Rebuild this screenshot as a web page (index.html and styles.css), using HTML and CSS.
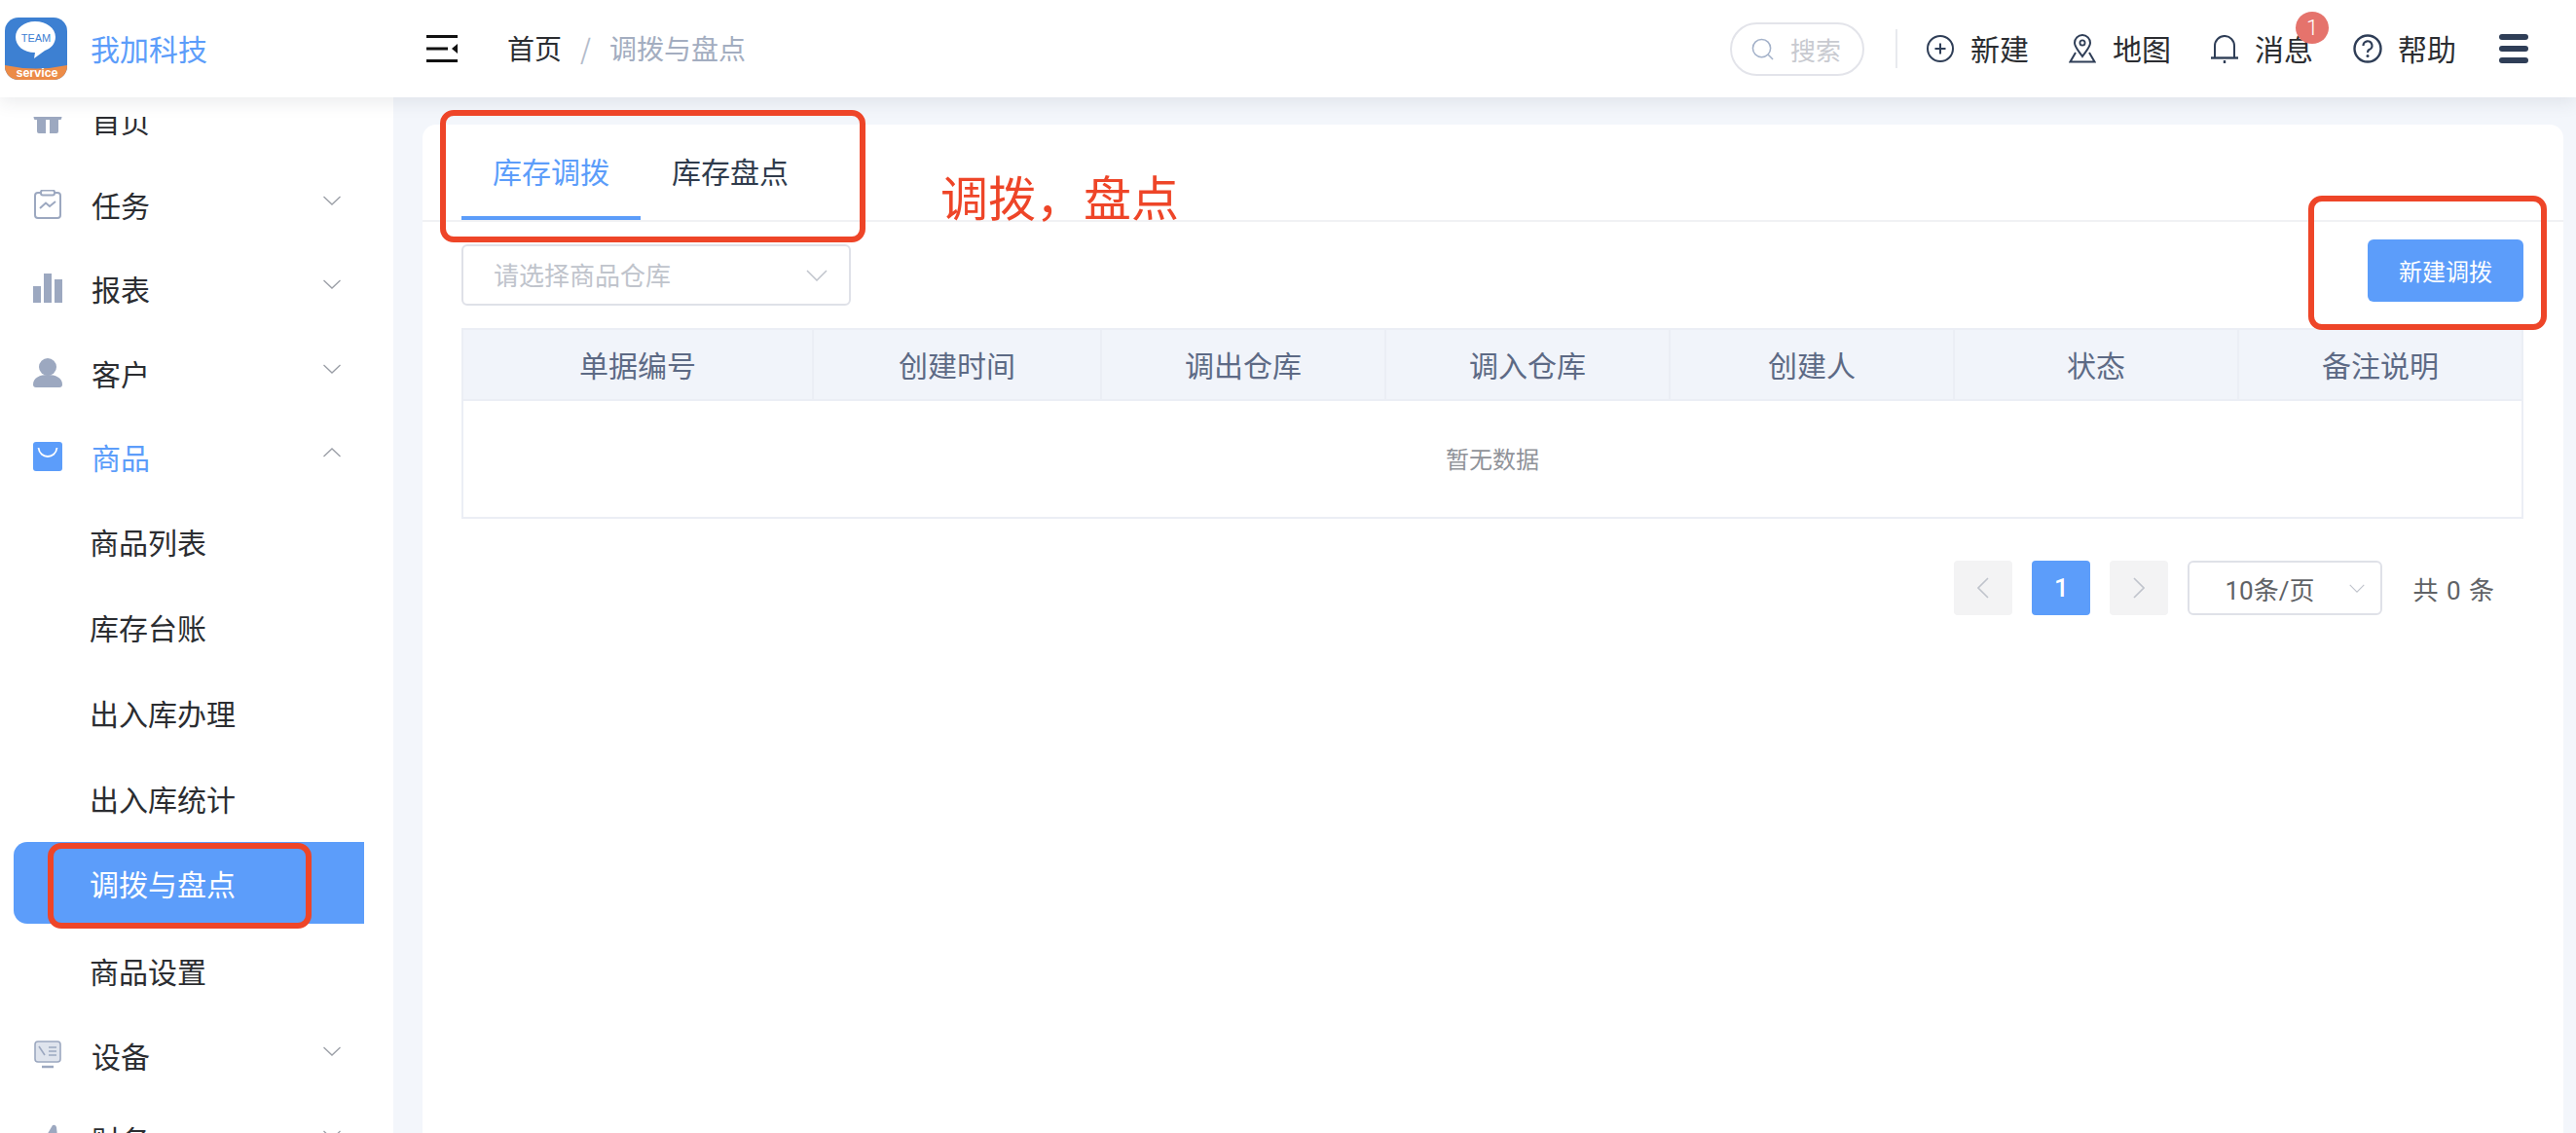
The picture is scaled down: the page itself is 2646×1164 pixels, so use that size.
FILE: index.html
```html
<!DOCTYPE html>
<html lang="zh-CN">
<head>
    <meta charset="UTF-8">
    <title>调拨与盘点</title>
    <link rel="stylesheet" href="styles.css">
</head>
<body>
    <!-- Top bar -->
    <header class="topbar">
        <div class="brand">
            <svg class="logo" viewBox="0 0 64 64">
                <defs><clipPath id="logoClip"><rect width="64" height="64" rx="14"/></clipPath></defs>
                <g clip-path="url(#logoClip)">
                    <rect width="64" height="64" fill="#3d80d2"/>
                    <path d="M0 49 Q32 56 64 49 V64 H0 Z" fill="#ec8b47"/>
                    <path d="M31 4 C43 4 52 11 52 20 C52 27 47 32 41 34 L30 42 L31 36 C19 36 11 29 11 20 C11 11 20 4 31 4 Z" fill="#fff"/>
                    <text x="32" y="25" class="logo-team">TEAM</text>
                    <text x="33" y="61" class="logo-service">service</text>
                </g>
            </svg>
            <span class="brand-name">我加科技</span>
        </div>
        <div class="topbar-main">
            <svg class="toggle" viewBox="0 0 32 28">
                <path d="M0 1.5H32M0 14H22M0 26.5H32" stroke="#111" stroke-width="3" fill="none"/>
                <path d="M32 9V19L26 14Z" fill="#111"/>
            </svg>
            <nav class="breadcrumb">
                <span>首页</span>
                <span class="sep">/</span>
                <span class="current">调拨与盘点</span>
            </nav>
            <div class="top-actions">
                <div class="search">
                    <svg class="search-icon" viewBox="0 0 24 24">
                        <circle cx="11" cy="11" r="9.5" fill="none" stroke="#a3b1c9" stroke-width="1.6"/>
                        <path d="M18 18L23 23" stroke="#a3b1c9" stroke-width="1.6"/>
                    </svg>
                    <span>搜索</span>
                </div>
                <div class="top-divider"></div>
                <div class="top-link">
                    <svg class="top-icon" viewBox="0 0 28 28">
                        <circle cx="14" cy="14" r="13" fill="none" stroke="#2f3e57" stroke-width="2"/>
                        <path d="M14 8.5V19.5M8.500 14H19.500" stroke="#2f3e57" stroke-width="2"/>
                    </svg>
                    <span>新建</span>
                </div>
                <div class="top-link">
                    <svg class="top-icon" viewBox="0 0 28 30">
                        <path d="M14 23 C9 16 6 13 6 9 A8 8 0 0 1 22 9 C22 13 19 16 14 23 Z" fill="none" stroke="#2f3e57" stroke-width="2"/>
                        <circle cx="14" cy="9" r="2.600" fill="none" stroke="#2f3e57" stroke-width="1.800"/>
                        <path d="M7 19L1.500 28.500H26.500L21 19" fill="none" stroke="#2f3e57" stroke-width="2"/>
                    </svg>
                    <span>地图</span>
                </div>
                <div class="top-link has-badge">
                    <svg class="top-icon" viewBox="0 0 28 30">
                        <path d="M4 24 V12 A10 10 0 0 1 24 12 V24" fill="none" stroke="#2f3e57" stroke-width="2"/>
                        <path d="M0 24.500H28" stroke="#2f3e57" stroke-width="2.400"/>
                        <path d="M14 1V3M14 27V30" stroke="#2f3e57" stroke-width="2.400"/>
                    </svg>
                    <span>消息</span>
                    <span class="badge">1</span>
                </div>
                <div class="top-link">
                    <svg class="top-icon help-icon" viewBox="0 0 30 30">
                        <circle cx="15" cy="15" r="13.500" fill="none" stroke="#2f3e57" stroke-width="2.400"/>
                        <path d="M10.500 12 A4.500 4.500 0 1 1 16.500 16 C15.200 16.700 15 17.500 15 19" fill="none" stroke="#2f3e57" stroke-width="2.200"/>
                        <circle cx="15" cy="22.500" r="1.500" fill="#2f3e57"/>
                    </svg>
                    <span>帮助</span>
                </div>
                <div class="hamburger"><i></i><i></i><i></i></div>
            </div>
        </div>
    </header>

    <div class="layout">
        <!-- Sidebar, scrolled a little so the first row sits under the top bar -->
        <aside class="sidebar">
            <ul class="menu">
                <li class="menu-item">
                    <svg class="menu-icon" viewBox="0 0 30 30">
                        <path d="M1.500 10 H28.500 Q30.500 12 28.500 15 H26 V27 Q26 29 24 29 H17 V15 H13 V29 H6 Q4 29 4 27 V15 H1.500 Q-0.500 12 1.500 10 Z" fill="#9ca8c0"/>
                    </svg>
                    <span>首页</span>
                </li>
                <li class="menu-item">
                    <svg class="menu-icon" viewBox="0 0 30 30">
                        <rect x="2" y="3" width="26" height="26" rx="3" fill="none" stroke="#9ca8c0" stroke-width="2"/>
                        <rect x="8" y="0.500" width="14" height="5" rx="2" fill="#fff" stroke="#9ca8c0" stroke-width="2"/>
                        <path d="M7 19L13 13.500L17 17L23 12" fill="none" stroke="#9ca8c0" stroke-width="2"/>
                    </svg>
                    <span>任务</span>
                    <svg class="chevron" viewBox="0 0 18 10"><path d="M0.500 1L9 9L17.500 1" fill="none" stroke="#9a9ea6" stroke-width="1.300"/></svg>
                </li>
                <li class="menu-item">
                    <svg class="menu-icon" viewBox="0 0 30 30">
                        <path d="M0 13H8V30H0ZM11 0H19V30H11ZM22 6H30V30H22Z" fill="#9ca8c0"/>
                    </svg>
                    <span>报表</span>
                    <svg class="chevron" viewBox="0 0 18 10"><path d="M0.500 1L9 9L17.500 1" fill="none" stroke="#9a9ea6" stroke-width="1.300"/></svg>
                </li>
                <li class="menu-item">
                    <svg class="menu-icon" viewBox="0 0 30 30">
                        <circle cx="15" cy="9" r="9" fill="#9ca8c0"/>
                        <path d="M0 27 C0 20 7 17 15 17 C23 17 30 20 30 27 Q30 30 27 30 H3 Q0 30 0 27 Z" fill="#9ca8c0"/>
                    </svg>
                    <span>客户</span>
                    <svg class="chevron" viewBox="0 0 18 10"><path d="M0.500 1L9 9L17.500 1" fill="none" stroke="#9a9ea6" stroke-width="1.300"/></svg>
                </li>
                <li class="menu-item open">
                    <svg class="menu-icon" viewBox="0 0 30 30">
                        <rect width="30" height="30" rx="3" fill="#5c9dfa"/>
                        <path d="M5.500 6 C7 18 23 18 24.500 6" fill="none" stroke="#fff" stroke-width="1.800"/>
                    </svg>
                    <span>商品</span>
                    <svg class="chevron" viewBox="0 0 18 10"><path d="M0.500 9L9 1L17.500 9" fill="none" stroke="#9a9ea6" stroke-width="1.300"/></svg>
                </li>
                <li class="submenu-item">商品列表</li>
                <li class="submenu-item">库存台账</li>
                <li class="submenu-item">出入库办理</li>
                <li class="submenu-item">出入库统计</li>
                <li class="submenu-item active"><span class="active-pill">调拨与盘点</span></li>
                <li class="submenu-item">商品设置</li>
                <li class="menu-item">
                    <svg class="menu-icon" viewBox="0 0 30 30">
                        <rect x="2" y="1" width="26" height="21" rx="3" fill="#dfe4ed" stroke="#9ca8c0" stroke-width="1.600"/>
                        <path d="M6 6L12 15M16 7H24M16 11H24M16 15H24" stroke="#9ca8c0" stroke-width="1.600" fill="none"/>
                        <path d="M9 27H21" stroke="#9ca8c0" stroke-width="2.500"/>
                    </svg>
                    <span>设备</span>
                    <svg class="chevron" viewBox="0 0 18 10"><path d="M0.500 1L9 9L17.500 1" fill="none" stroke="#9a9ea6" stroke-width="1.300"/></svg>
                </li>
                <li class="menu-item">
                    <svg class="menu-icon" viewBox="0 0 30 30">
                        <path d="M3 30 L20 1 Q23 0 24 3 L27 30 Z" fill="#9ca8c0"/>
                    </svg>
                    <span>财务</span>
                    <svg class="chevron" viewBox="0 0 18 10"><path d="M0.500 1L9 9L17.500 1" fill="none" stroke="#9a9ea6" stroke-width="1.300"/></svg>
                </li>
            </ul>
        </aside>

        <main class="content">
            <section class="card">
                <div class="tabs">
                    <div class="tab active">库存调拨</div>
                    <div class="tab">库存盘点</div>
                </div>

                <div class="toolbar">
                    <div class="select store-select">
                        <span>请选择商品仓库</span>
                        <svg class="select-arrow" viewBox="0 0 22 12"><path d="M1 1L11 11L21 1" fill="none" stroke="#c0c4cc" stroke-width="1.500"/></svg>
                    </div>
                    <button class="btn-primary">新建调拨</button>
                </div>

                <table class="data-table">
                    <thead>
                        <tr>
                            <th class="col-first">单据编号</th>
                            <th class="col-second">创建时间</th>
                            <th>调出仓库</th>
                            <th>调入仓库</th>
                            <th>创建人</th>
                            <th>状态</th>
                            <th>备注说明</th>
                        </tr>
                    </thead>
                    <tbody>
                        <tr><td colspan="7" class="empty">暂无数据</td></tr>
                    </tbody>
                </table>

                <div class="pagination">
                    <div class="page-btn">
                        <svg class="page-arrow" viewBox="0 0 12 22"><path d="M11 1L1 11L11 21" fill="none" stroke="#c0c4cc" stroke-width="1.600"/></svg>
                    </div>
                    <div class="page-btn current">1</div>
                    <div class="page-btn">
                        <svg class="page-arrow" viewBox="0 0 12 22"><path d="M1 1L11 11L1 21" fill="none" stroke="#c0c4cc" stroke-width="1.600"/></svg>
                    </div>
                    <div class="select size-select">
                        <span>10条/页</span>
                        <svg class="select-arrow small" viewBox="0 0 22 12"><path d="M1 1L11 11L21 1" fill="none" stroke="#c0c4cc" stroke-width="1.500"/></svg>
                    </div>
                    <div class="page-total">共 0 条</div>
                </div>
            </section>
        </main>
    </div>

    <!-- Red review marks drawn over the page -->
    <div class="mark mark-tabs"></div>
    <div class="mark mark-side"></div>
    <div class="mark mark-btn"></div>
    <div class="mark-note">调拨，盘点</div>
</body>
</html>
```

FILE: styles.css
```css
* {
    margin: 0;
    padding: 0;
    box-sizing: border-box;
}

body {
    width: 2646px;
    height: 1164px;
    overflow: hidden;
    position: relative;
    background: #f3f6fb;
    color: #2b2d31;
    font-family: "Noto Sans CJK SC", "Noto Sans", sans-serif;
    font-size: 30px;
}

/* top bar */
.topbar {
    position: relative;
    z-index: 2;
    display: flex;
    height: 100px;
    background: white;
    box-shadow: 0 4px 18px rgba(40, 50, 70, 0.1);
}

.brand {
    display: flex;
    align-items: center;
    width: 404px;
    padding-left: 5px;
}

.logo {
    width: 64px;
    height: 64px;
    margin-right: 24px;
}

.logo-team {
    font-family: "Liberation Sans", sans-serif;
    font-size: 11px;
    fill: #3d80d2;
    text-anchor: middle;
}

.logo-service {
    font-family: "Liberation Sans", sans-serif;
    font-size: 12.500px;
    font-weight: 700;
    fill: #fff;
    text-anchor: middle;
}

.brand-name {
    color: #5c9dfa;
    font-size: 30px;
    margin-top: -3px;
}

.topbar-main {
    flex: 1;
    display: flex;
    align-items: center;
    padding-left: 34px;
}

.toggle {
    width: 32px;
    height: 28px;
    margin-right: 51px;
}

.breadcrumb {
    display: flex;
    align-items: center;
    font-size: 28px;
    margin-top: -2px;
}

.breadcrumb .sep {
    margin: 0 19px;
    color: #b4bccb;
}

.breadcrumb .current {
    color: #a3adc0;
}

.top-actions {
    margin-left: auto;
    display: flex;
    align-items: center;
    padding-right: 49px;
}

.search {
    display: flex;
    align-items: center;
    width: 138px;
    height: 55px;
    padding-left: 20px;
    border: 2px solid #e3e4ea;
    border-radius: 28px;
    color: #c8cad0;
    font-size: 26px;
}

.search-icon {
    width: 23px;
    height: 23px;
    margin-right: 17px;
}

.top-divider {
    width: 2px;
    height: 40px;
    margin: 0 30px 0 32px;
    background: #e8eaee;
}

.top-link {
    position: relative;
    display: flex;
    align-items: center;
    margin-right: 41px;
    font-size: 30px;
}

.top-link > span:not(.badge) {
    margin-top: -3px;
}

.top-icon {
    width: 28px;
    height: 30px;
    margin-right: 17px;
}

.help-icon {
    width: 30px;
    margin-right: 16px;
}

.badge {
    position: absolute;
    top: -18px;
    right: -16px;
    width: 34px;
    height: 33px;
    border-radius: 50%;
    background: #e5736c;
    color: white;
    font-family: Roboto, sans-serif;
    font-size: 22px;
    font-weight: 300;
    line-height: 33px;
    text-align: center;
}

.hamburger {
    width: 30px;
    margin-left: 3px;
    display: flex;
    flex-direction: column;
    gap: 6px;
}

.hamburger i {
    display: block;
    height: 6px;
    border-radius: 3px;
    background: #2f3e57;
}

/* page body */
.layout {
    display: flex;
    height: 1064px;
}

/* sidebar */
.sidebar {
    position: relative;
    width: 404px;
    flex-shrink: 0;
    overflow: hidden;
    background: white;
}

.sidebar::before {
    content: "";
    position: absolute;
    left: 0;
    top: 0;
    z-index: 1;
    width: 100%;
    height: 20px;
    background: white;
}

.menu {
    list-style: none;
    margin-top: -20px;
}

.menu-item {
    display: flex;
    align-items: center;
    height: 86.500px;
    padding: 0 54px 0 34px;
}

.menu-item.open {
    margin-bottom: -1px;
}

.menu-icon {
    width: 30px;
    height: 30px;
    margin-right: 30px;
    flex-shrink: 0;
}

.chevron {
    width: 18px;
    height: 10px;
    margin-left: auto;
    margin-top: -8px;
}

.menu-item.open > span {
    color: #5c9dfa;
}

.submenu-item {
    height: 88px;
    line-height: 88px;
    padding-left: 92px;
}

.submenu-item.active {
    padding-left: 14px;
}

.active-pill {
    display: block;
    width: 360px;
    height: 84px;
    line-height: 84px;
    margin-top: 1px;
    padding-left: 78px;
    background: #5c9dfa;
    border-radius: 14px 0 0 14px;
    color: white;
}

/* content */
.content {
    flex: 1;
    padding: 28px 13px 0 30px;
}

.card {
    height: 100%;
    background: white;
    border-radius: 14px 14px 0 0;
}

.tabs {
    display: flex;
    height: 100px;
    padding-left: 40px;
    border-bottom: 2px solid #f0f1f4;
}

.tab {
    height: 98px;
    padding: 0 32px;
    line-height: 94px;
    color: #2f3b4c;
}

.tab.active {
    color: #5c9dfa;
    border-bottom: 4px solid #5c9dfa;
}

.toolbar {
    display: flex;
    justify-content: space-between;
    align-items: flex-start;
    height: 109px;
    padding: 18px 40px 0;
}

.select {
    position: relative;
    display: flex;
    align-items: center;
    background: white;
    border: 2px solid #dfe1e8;
    border-radius: 6px;
}

.store-select {
    width: 400px;
    height: 63px;
    margin-top: 5px;
    padding: 0 0 3px 31px;
    color: #c0c4cc;
    font-size: 26px;
}

.select-arrow {
    position: absolute;
    right: 22px;
    top: 50%;
    width: 22px;
    height: 12px;
    margin-top: -6px;
}

.btn-primary {
    width: 160px;
    height: 64px;
    margin-right: 1px;
    padding-bottom: 2px;
    border: none;
    border-radius: 6px;
    background: #5c9dfa;
    color: white;
    font-family: inherit;
    font-size: 24px;
}

.data-table {
    width: 2118px;
    margin-left: 40px;
    table-layout: fixed;
    border-collapse: collapse;
}

.data-table th {
    height: 73px;
    padding-bottom: 2px;
    background: #f1f4fa;
    border: 2px solid #ebeef5;
    color: #5d6a85;
    font-size: 30px;
    font-weight: normal;
}

.col-first {
    width: 360px;
}

.col-second {
    width: 296px;
}

.empty {
    height: 121px;
    padding-bottom: 2px;
    border: 2px solid #ebeef5;
    color: #909399;
    font-size: 24px;
    text-align: center;
}

.pagination {
    display: flex;
    justify-content: flex-end;
    align-items: center;
    gap: 20px;
    margin-top: 43px;
    padding-right: 71px;
    font-family: Roboto, "Noto Sans CJK SC", sans-serif;
    font-size: 26px;
    color: #606266;
}

.page-btn {
    display: flex;
    align-items: center;
    justify-content: center;
    width: 60px;
    height: 56px;
    background: #f3f3f4;
    border-radius: 4px;
}

.page-btn.current {
    background: #5c9dfa;
    color: white;
    font-weight: 500;
}

.page-arrow {
    width: 12px;
    height: 22px;
}

.size-select {
    width: 200px;
    height: 56px;
    padding-left: 36px;
}

.select-arrow.small {
    width: 16px;
    height: 9px;
    right: 16px;
    margin-top: -4px;
}

.page-total {
    margin-left: 11px;
    word-spacing: 2px;
}

/* review marks */
.mark {
    position: absolute;
    z-index: 3;
    border: 6px solid #ee4528;
    border-radius: 14px;
}

.mark-tabs {
    left: 452px;
    top: 113px;
    width: 437px;
    height: 136px;
}

.mark-side {
    left: 49px;
    top: 866px;
    width: 271px;
    height: 88px;
}

.mark-btn {
    left: 2371px;
    top: 201px;
    width: 245px;
    height: 138px;
}

.mark-note {
    position: absolute;
    z-index: 3;
    left: 966px;
    top: 166px;
    color: #ee4528;
    font-size: 49px;
    line-height: 70px;
}
```
